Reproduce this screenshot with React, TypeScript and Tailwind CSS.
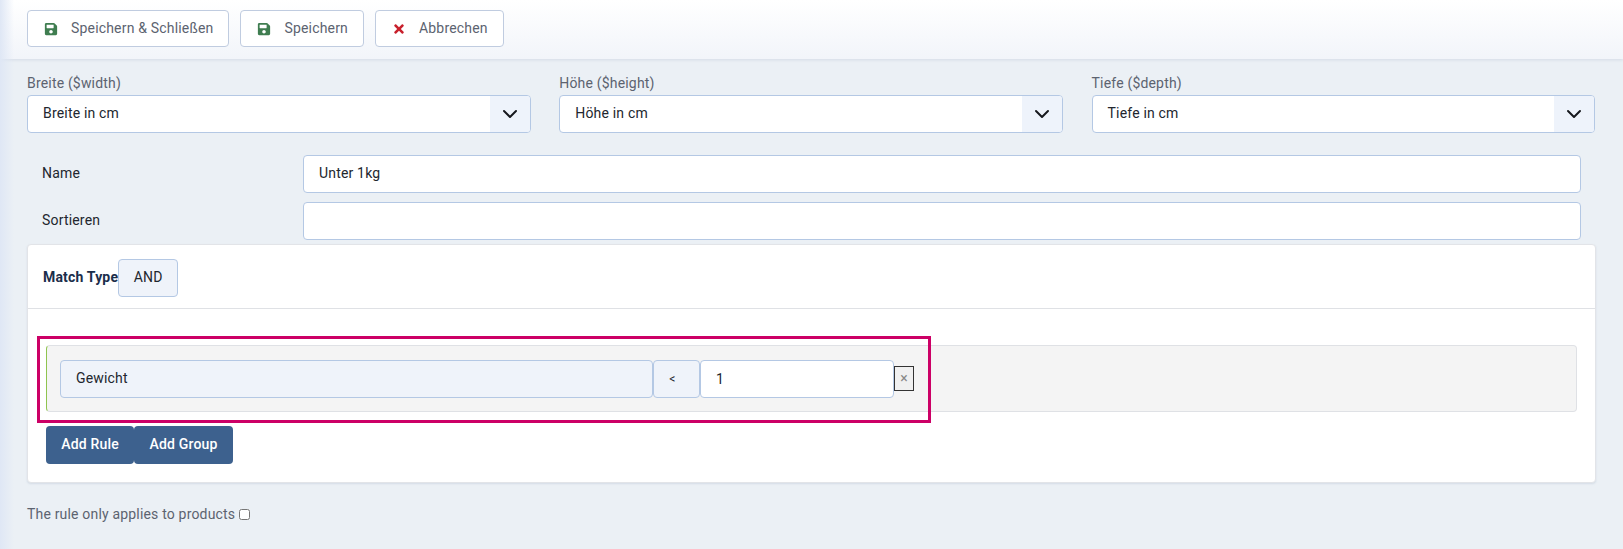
import { FaSave, FaTimes } from 'react-icons/fa';

const toolbar = [
  { label: 'Speichern & Schließen', icon: 'save' },
  { label: 'Speichern', icon: 'save' },
  { label: 'Abbrechen', icon: 'cancel' },
];

const selects = [
  { label: 'Breite ($width)', value: 'Breite in cm' },
  { label: 'Höhe ($height)', value: 'Höhe in cm' },
  { label: 'Tiefe ($depth)', value: 'Tiefe in cm' },
];

function Chevron() {
  return (
    <svg viewBox="0 0 16 16" className="w-4 h-4" fill="none" stroke="#16181d" strokeWidth="2" strokeLinecap="round" strokeLinejoin="round">
      <path d="M2 5l6 6 6-6" />
    </svg>
  );
}

export default function App() {
  return (
    <div className="relative h-[549px] w-[1623px] overflow-hidden bg-[#ebf0f5] text-[14px] tracking-[0.18px] text-[#22262e] font-['Roboto',sans-serif]">
      <div className="flex h-[59px] gap-[11px] bg-gradient-to-b from-white to-[#f2f5fa] pl-[27px] pt-[10px] shadow-[0_1px_3px_rgba(120,140,170,0.2)]">
        {toolbar.map((b) => (
          <button
            key={b.label}
            className="flex h-[37px] items-center gap-[13px] rounded border border-[#c0cce0] bg-white pl-[16px] pr-[15px] text-[#5c6370]"
          >
            {b.icon === 'save' ? (
              <FaSave className="h-[14px] w-[14px] text-[#3f7d50]" />
            ) : (
              <FaTimes className="h-[14px] w-[14px] text-[#c8202c]" />
            )}
            <span>{b.label}</span>
          </button>
        ))}
      </div>

      <div className="flex gap-[28.6px] pl-[27px] pt-[15px]">
        {selects.map((s) => (
          <div key={s.label} className="w-[503.7px]">
            <div className="mb-[2px] leading-[19px] text-[#5c6370]">{s.label}</div>
            <div className="flex h-[38px] w-full items-center justify-between overflow-hidden rounded border border-[#b4c8e4] bg-white pl-[15px]">
              <span className="pb-[2px]">{s.value}</span>
              <div className="flex h-full w-[40px] items-center justify-center bg-[#eef3fb]">
                <Chevron />
              </div>
            </div>
          </div>
        ))}
      </div>

      <div className="flex flex-col gap-[9px] pl-[42px] pr-[42px] pt-[22px]">
        {[
          { label: 'Name', value: 'Unter 1kg' },
          { label: 'Sortieren', value: '' },
        ].map((f) => (
          <div key={f.label} className="flex items-center">
            <div className="w-[261px] pb-[2px] text-[#22262e]">{f.label}</div>
            <input
              readOnly
              value={f.value}
              className="h-[38px] flex-1 rounded border border-[#b4c8e4] bg-white pb-[2px] pl-[15px] outline-none"
            />
          </div>
        ))}
      </div>

      <div className="mx-[27px] mt-[4px] rounded border border-[#e2e4e8] bg-white shadow-[0_1px_2px_rgba(120,140,170,0.2)]">
        <div className="flex h-[64px] items-center border-b border-[#dfe1e5] pl-[15px] pt-[2px]">
          <span className="font-bold text-[#1b2e4b]">Match Type</span>
          <div className="flex h-[38px] w-[60px] items-center justify-center rounded border border-[#b4c8e4] bg-[#eff3fa]">AND</div>
        </div>
        <div className="px-[18px] pb-[18px] pt-[36px]">
          <div className="flex h-[67px] items-center rounded border border-[#dfe1e5] border-l-[#8fc44f] bg-[#f4f4f4] pl-[13px]">
            <div className="flex h-[38px] w-[593px] items-center rounded border border-[#b4c8e4] bg-[#eff3fa] pl-[15px]">Gewicht</div>
            <div className="flex h-[38px] w-[47px] items-center justify-center rounded border border-[#b4c8e4] bg-[#eff3fa] pr-[8px] text-[12px]">&lt;</div>
            <input
              readOnly
              value="1"
              className="h-[38px] w-[194px] rounded border border-[#b4c8e4] bg-white pl-[15px] outline-none"
            />
            <div className="flex h-[25px] w-[20px] items-center justify-center border border-[#333] bg-[#f0f0f0] text-[14px] text-[#888]">×</div>
          </div>
          <div className="mt-[14px] flex">
            <button className="h-[38px] w-[88px] rounded bg-[#3d618e] pb-[2px] font-medium text-white">Add Rule</button>
            <button className="h-[38px] w-[99px] rounded bg-[#3d618e] pb-[2px] font-medium text-white">Add Group</button>
          </div>
        </div>
      </div>

      <div className="flex items-center gap-[4px] pl-[27px] pt-[21px] text-[#5c6370]">
        <span>The rule only applies to products</span>
        <input type="checkbox" className="m-0 h-[11px] w-[11px]" />
      </div>

      <div className="pointer-events-none absolute left-0 top-0 h-full w-[14px] bg-gradient-to-r from-[#dfe7f5] to-transparent" />
      <div className="pointer-events-none absolute left-[37px] top-[336px] h-[87px] w-[894px] border-[3px] border-[#cc0066]" />
    </div>
  );
}
